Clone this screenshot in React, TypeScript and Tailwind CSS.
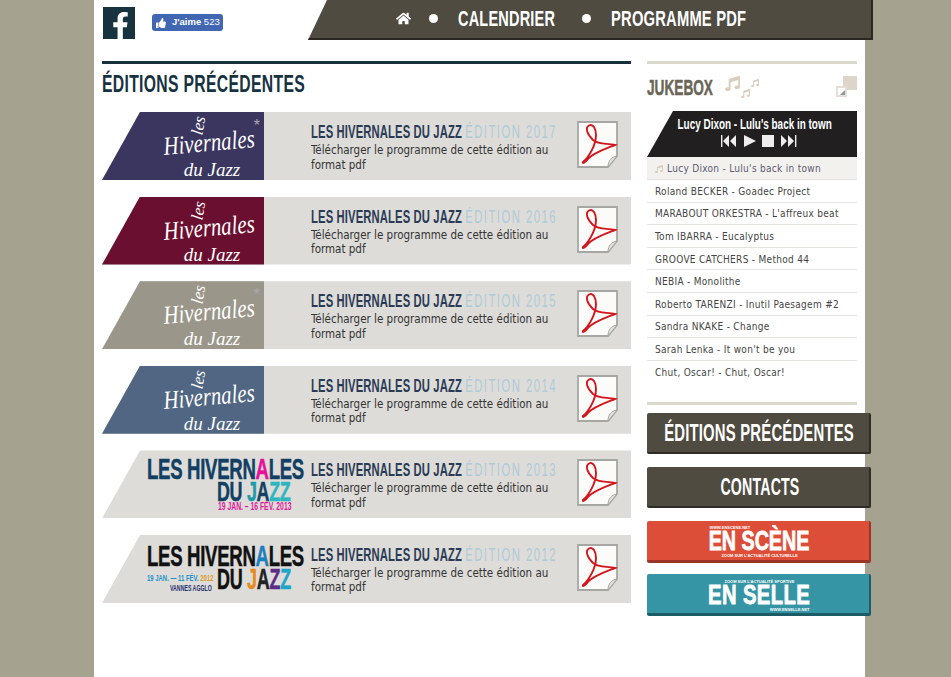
import { FaFacebookF, FaThumbsUp, FaHome, FaMusic } from "react-icons/fa";

const SANS = "font-['Liberation_Sans',Arial,sans-serif]";
const BODY = "font-['DejaVu_Sans_Condensed','Roboto',sans-serif]";

function PdfIcon() {
  return (
    <svg width="42" height="48" viewBox="0 0 42 48" className="shrink-0">
      <path d="M1 1 H40 V35 L31 46 H1 Z" fill="#fbfbfa" stroke="#a6a6a2" strokeWidth="1.8" />
      <path d="M31 46 C31 40 34 36 40 35 Z" fill="#e2e2df" stroke="#a6a6a2" strokeWidth="1" />
      <path
        d="M38 24 C30 22 22 24 16 19 C10 13 8 7 12 4.5 C16 2 19 8 19 14 C19 24 12 36 6 41 C5 43 8 42 11 38 C16 32 28 28 38 24 Z"
        fill="none"
        stroke="#d4161c"
        strokeWidth="1.9"
      />
    </svg>
  );
}

function HandLogo({ bg, star }: { bg: string; star?: boolean }) {
  return (
    <div className={`w-[162px] h-full flex pl-[57px] relative ${bg}`}>
      <div className="w-[100px] h-full flex flex-col items-center text-white font-['Liberation_Serif',serif] italic leading-none">
        <span className="text-[17px] -rotate-[80deg] mt-[5px] mr-[22px]">les</span>
        <span className="text-[26px] -rotate-[5deg] -mt-[4px] scale-x-[0.8] whitespace-nowrap">Hivernales</span>
        <span className="text-[19px] mt-[4px] ml-[6px] whitespace-nowrap">du Jazz</span>
      </div>
      {star && <span className="absolute right-[4px] top-[2px] text-[16px] text-[#a9a7b5] font-['Liberation_Sans',sans-serif]">*</span>}
    </div>
  );
}

function Logo2013() {
  return (
    <div className={`pl-[45px] pt-[4px] ${SANS} font-bold leading-none`}>
      <div className="text-[30px] h-[24px] whitespace-nowrap origin-left scale-x-[0.62] w-[260px] text-[#123f63] tracking-[-0.5px] [-webkit-text-stroke:0.5px]">
        LES HIVERN<span className="text-[#e6109a]">A</span>LES
      </div>
      <div className="text-[28px] h-[23px] whitespace-nowrap ml-[70px] origin-left scale-x-[0.64] w-[130px] text-[#123f63] tracking-[-0.5px] [-webkit-text-stroke:0.5px]">
        DU <span className="text-[#1e9aa8]">J</span><span className="text-[#123f63]">A</span><span className="text-[#2cb6c0]">ZZ</span>
      </div>
      <div className="text-[10px] mt-[1px] whitespace-nowrap ml-[71px] origin-left scale-x-[0.68] w-[110px] text-[#e0189a]">19 JAN. – 16 FÉV. 2013</div>
    </div>
  );
}

function Logo2012() {
  return (
    <div className={`pl-[45px] pt-[6px] ${SANS} font-bold leading-none`}>
      <div className="text-[30px] h-[23px] whitespace-nowrap origin-left scale-x-[0.62] w-[260px] text-[#111] tracking-[-0.5px] [-webkit-text-stroke:0.5px]">
        LES HIVERN<span className="text-[#1d7fc0]">A</span>LES
      </div>
      <div className="flex">
        <div className="w-[70px] pt-[10px] shrink-0">
          <div className="text-[9px] whitespace-nowrap origin-left scale-x-[0.66] w-[100px] text-[#2391c9]">19 JAN. — 11 FÉV. <span className="text-[#e29a2b]">2012</span></div>
          <div className="text-[9px] whitespace-nowrap ml-[23px] mt-[1px] origin-left scale-x-[0.58] w-[80px] text-[#26306e]">VANNES AGGLO</div>
        </div>
        <div className="text-[30px] whitespace-nowrap origin-left scale-x-[0.6] w-[130px] text-[#111] tracking-[-0.5px] [-webkit-text-stroke:0.5px]">
          DU <span className="text-[#e58a1f]">J</span><span className="text-[#222]">A</span><span className="text-[#5b2c86]">Z</span><span className="text-[#1ea5c8]">Z</span>
        </div>
      </div>
    </div>
  );
}

const rows = [
  { year: "2017", logo: <HandLogo bg="bg-[#3a365f]" star /> },
  { year: "2016", logo: <HandLogo bg="bg-[#6b0f30]" /> },
  { year: "2015", logo: <HandLogo bg="bg-[#9a978a]" star /> },
  { year: "2014", logo: <HandLogo bg="bg-[#506683]" /> },
  { year: "2013", logo: <Logo2013 /> },
  { year: "2012", logo: <Logo2012 /> },
];

const tracks = [
  "Roland BECKER - Goadec Project",
  "MARABOUT ORKESTRA - L'affreux beat",
  "Tom IBARRA - Eucalyptus",
  "GROOVE CATCHERS - Method 44",
  "NEBIA - Monolithe",
  "Roberto TARENZI - Inutil Paesagem #2",
  "Sandra NKAKE - Change",
  "Sarah Lenka - It won't be you",
  "Chut, Oscar! - Chut, Oscar!",
];

function SideButton({ label, scale }: { label: string; scale: string }) {
  return (
    <div className="h-[41px] w-[224px] rounded-[2px] bg-[#4f4b41] border-b-2 border-r-2 border-[#2f2c25] flex items-center justify-center pl-[3px]">
      <span className={`${SANS} font-bold text-white text-[24px] whitespace-nowrap tracking-[0.3px] ${scale}`}>{label}</span>
    </div>
  );
}

export default function App() {
  return (
    <div className="min-h-[677px] h-[677px] overflow-hidden bg-[#a5a28f]">
      <div className="ml-[94px] w-[771px] h-[677px] bg-white">
        {/* header */}
        <header className="h-[39px] flex">
          <div className="w-[214px] shrink-0 flex pl-[9px] pt-[7px]">
            <div className="w-[32px] h-[32px] bg-[#16333f] flex items-end justify-center pl-[3px] text-white">
              <FaFacebookF className="text-[27px]" />
            </div>
            <div className={`ml-[17px] mt-[7px] w-[71px] h-[17px] rounded-[3px] bg-[#4267b2] flex items-center pl-[4px] gap-[6px] text-white text-[9.5px] font-bold ${SANS}`}>
              <FaThumbsUp className="text-[10px]" />
              <span className="whitespace-nowrap">J'aime <span className="font-normal">523</span></span>
            </div>
          </div>
          <nav className="w-[565px] shrink-0 h-[40px] bg-[#4f4b41] border-b-2 border-r-2 border-[#2b2822] [clip-path:polygon(19px_0,100%_0,100%_100%,0_100%)] flex items-center pl-[88px] pb-[1px] text-white">
            <FaHome className="text-[15px] shrink-0" />
            <span className="ml-[18px] w-[9px] h-[9px] rounded-full bg-white shrink-0" />
            <div className="w-[97px] ml-[20px] shrink-0">
              <span className={`${SANS} font-bold text-[22px] inline-block whitespace-nowrap origin-left scale-x-[0.66] tracking-[0.3px]`}>CALENDRIER</span>
            </div>
            <span className="ml-[27px] w-[9px] h-[9px] rounded-full bg-white shrink-0" />
            <div className="w-[136px] ml-[20px] shrink-0">
              <span className={`${SANS} font-bold text-[22px] inline-block whitespace-nowrap origin-left scale-x-[0.67] tracking-[0.3px]`}>PROGRAMME PDF</span>
            </div>
          </nav>
        </header>

        <div className="flex mt-[22px] pl-[8px]">
          {/* main column */}
          <main className="w-[529px] shrink-0">
            <div className="h-[3px] bg-[#17323f]" />
            <h1 className="h-[48px] pt-[6px] text-[#17323f]">
              <span className={`${SANS} font-bold text-[24px] leading-[28px] inline-block whitespace-nowrap origin-left scale-x-[0.655] tracking-[0.5px]`}>ÉDITIONS PRÉCÉDENTES</span>
            </h1>
            <div className="flex flex-col gap-[16.6px]">
              {rows.map((r) => (
                <div key={r.year} className="h-[68px] flex bg-[#dedcd9] [clip-path:polygon(38px_0,100%_0,100%_100%,0_100%)]">
                  <div className="w-[209px] shrink-0 h-full">{r.logo}</div>
                  <div className="w-[266px] shrink-0 pt-[9px]">
                    <div className={`${SANS} font-bold text-[18px] leading-[22px] h-[22px] text-[#2a3b55] whitespace-nowrap origin-left scale-x-[0.625] w-[400px] tracking-[0.2px]`}>
                      LES HIVERNALES DU JAZZ <span className="text-[#aecbd8] font-normal tracking-[2.4px]">ÉDITION {r.year}</span>
                    </div>
                    <p className={`${BODY} text-[11.5px] leading-[14.5px] text-[#333] w-[250px]`}>Télécharger le programme de cette édition au format pdf</p>
                  </div>
                  <div className="pt-[9px]"><PdfIcon /></div>
                </div>
              ))}
            </div>
          </main>

          {/* sidebar */}
          <aside className="w-[224px] ml-[16px] shrink-0">
            <div className="w-[210px]">
              <div className="h-[3px] bg-[#ddd8cc]" />
              <div className="h-[47px] flex items-center relative">
                <span className={`${SANS} font-bold text-[22px] text-[#6b6557] inline-block whitespace-nowrap origin-left scale-x-[0.62] w-[70px] [-webkit-text-stroke:0.5px]`}>JUKEBOX</span>
                <div className="flex text-[#d9cfbc] ml-[8px] h-[26px]">
                  <FaMusic className="text-[15px] mt-[1px]" />
                  <FaMusic className="text-[9px] mt-[14px] ml-[1px]" />
                  <FaMusic className="text-[8px] mt-[4px] ml-[1px]" />
                </div>
                <div className="absolute right-0 top-[12px] w-[21px] h-[21px]">
                  <div className="absolute right-0 top-0 w-[14px] h-[14px] bg-[#ddd5c9]" />
                  <div className="absolute left-0 bottom-0 w-[11px] h-[11px] bg-white border-2 border-[#e4ded5]">
                    <div className="absolute right-0 bottom-0 w-0 h-0 border-l-[5px] border-l-transparent border-b-[5px] border-b-[#8c96a0]" />
                  </div>
                </div>
              </div>
              <div className="h-[46px] bg-[#211f1f] [clip-path:polygon(26px_0,100%_0,100%_100%,0_100%)] flex flex-col items-center pl-[6px]">
                <span className={`${SANS} font-bold text-white text-[14px] leading-[16px] mt-[5px] whitespace-nowrap scale-x-[0.71]`}>Lucy Dixon - Lulu's back in town</span>
                <svg width="76" height="14" viewBox="0 0 76 14" className="mt-[2px] ml-[8px]" fill="#eeeeee">
                  <path d="M0 1h1.4v12H0zM8 1v12L2 7zM15 1v12L9 7z" />
                  <path d="M23 1 L35 7 L23 13 Z" />
                  <path d="M41 1h12v12H41z" />
                  <path d="M60 1v12l6-6zM67 1v12l6-6zM74 1h1.4v12H74z" />
                </svg>
              </div>
              <ul className={`${BODY} text-[10px] text-[#444]`}>
                <li className="h-[23px] bg-[#f3f1ee] border-b border-[#e2e2de] flex items-center pl-[8px] pt-[1px] text-[#5b5b72] tracking-[0.3px]">
                  <FaMusic className="text-[8px] text-[#d9cfbc] mr-[4px]" />
                  <span>Lucy Dixon - Lulu's back in town</span>
                </li>
                {tracks.map((t, i) => (
                  <li key={t} className={`h-[22.6px] flex items-center pl-[8px] pt-[1px] tracking-[0.3px] ${i < tracks.length - 1 ? "border-b border-[#e2e2de]" : ""}`}>{t}</li>
                ))}
              </ul>
              <div className="h-[3px] bg-[#ddd8cc] mt-[19px]" />
            </div>
            <div className="flex flex-col mt-[8px] gap-[13px]">
              <SideButton label="ÉDITIONS PRÉCÉDENTES" scale="scale-x-[0.62]" />
              <SideButton label="CONTACTS" scale="scale-x-[0.59]" />
            </div>
            <div className="mt-[13px] h-[42px] w-[224px] rounded-[2px] bg-[#dc4e38] border-b-[3px] border-r-2 border-[#9b3627] flex flex-col items-center pl-[3px] text-white font-bold">
              <span className={`${SANS} text-[4px] leading-[5px] mt-[4px] w-[100px]`}>WWW.ENSCENE.NET</span>
              <span className={`${SANS} text-[27px] leading-[20px] mt-[1px] whitespace-nowrap scale-x-[0.73] [-webkit-text-stroke:0.8px]`}>EN SCÈNE</span>
              <span className={`${SANS} text-[4px] leading-[5px] mt-[2px] whitespace-nowrap`}>ZOOM SUR L'ACTUALITÉ CULTURELLE</span>
            </div>
            <div className="mt-[11px] h-[42px] w-[224px] rounded-[2px] bg-[#3695a5] border-b-[3px] border-r-2 border-[#1c5c67] flex flex-col items-center pl-[3px] text-white font-bold">
              <span className={`${SANS} text-[4px] leading-[5px] mt-[5px] whitespace-nowrap`}>ZOOM SUR L'ACTUALITÉ SPORTIVE</span>
              <span className={`${SANS} text-[27px] leading-[20px] mt-[1px] whitespace-nowrap scale-x-[0.75] tracking-[0.5px] [-webkit-text-stroke:0.8px]`}>EN SELLE</span>
              <span className={`${SANS} text-[4px] leading-[5px] mt-[2px] w-[100px] text-right`}>WWW.ENSELLE.NET</span>
            </div>
          </aside>
        </div>
      </div>
    </div>
  );
}
